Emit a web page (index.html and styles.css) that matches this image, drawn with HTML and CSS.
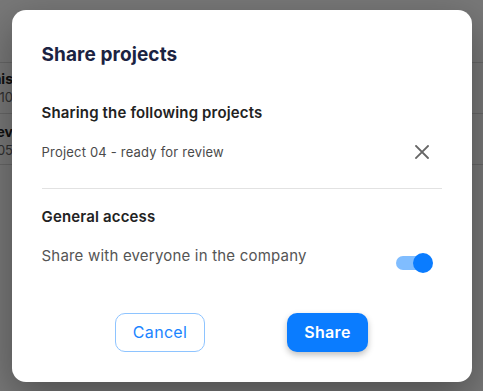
FILE: index.html
```html
<!DOCTYPE html>
<html lang="en">
<head>
<meta charset="utf-8">
<title>Share projects</title>
<link rel="stylesheet" href="styles.css">
</head>
<body>
<div class="page">
  <div class="row"><div class="cell"><span class="name">Banis</span><span class="num">1210</span></div></div>
  <div class="row"><div class="cell"><span class="name">Rev</span><span class="num">1205</span></div></div>
  <div class="row"></div>
</div>
<div class="overlay">
  <div class="dialog" role="dialog" aria-labelledby="dlg-title">
    <h2 class="title" id="dlg-title">Share projects</h2>
    <h3 class="section-title first">Sharing the following projects</h3>
    <div class="item-row">
      <span class="item-text">Project 04 - ready for review</span>
      <button class="icon-btn" aria-label="Remove">
        <svg width="14" height="14" viewBox="0 0 14 14"><path d="M1 1L13 13M13 1L1 13" stroke="#666" stroke-width="1.8" stroke-linecap="square" fill="none"/></svg>
      </button>
    </div>
    <hr class="divider">
    <h3 class="section-title">General access</h3>
    <div class="item-row">
      <span class="item-text access">Share with everyone in the company</span>
      <span class="toggle"><span class="track"></span><span class="knob"></span></span>
    </div>
    <div class="actions">
      <button class="btn btn-outline">Cancel</button>
      <button class="btn btn-primary">Share</button>
    </div>
  </div>
</div>
</body>
</html>
```
FILE: styles.css
```css
* { box-sizing: border-box; }
html, body { margin: 0; padding: 0; }
body {
  width: 483px;
  height: 391px;
  overflow: hidden;
  background: #ffffff;
  font-family: "Inter", "Lato", sans-serif;
  position: relative;
}
.page {
  padding-top: 62px;
}
.row {
  height: 51px;
  border-top: 1px solid #dcdcdc;
  display: flex;
}
.cell {
  width: 13px;
  overflow: hidden;
  display: flex;
  flex-direction: column;
  align-items: flex-end;
  padding-top: 6px;
  white-space: nowrap;
}
.row + .row .cell { padding-top: 8px; }
.name { font-weight: 700; font-size: 14px; color: #222; line-height: 19px; }
.num { font-size: 13px; color: #666; line-height: 19px; }

.overlay {
  position: absolute;
  inset: 0;
  background: rgba(0,0,0,0.53);
  display: flex;
  align-items: center;
  justify-content: center;
}
.dialog {
  width: 460px;
  height: 372px;
  background: #fff;
  border-radius: 14px;
  padding: 33px 30px 30px;
  display: flex;
  flex-direction: column;
  box-shadow: 0 14px 40px rgba(0,0,0,0.35);
}
.title {
  margin: 0;
  font-size: 19px;
  line-height: 24px;
  font-weight: 700;
  color: #1b2342;
  letter-spacing: 0.1px;
}
.section-title {
  margin: 18px 0 0;
  font-size: 15px;
  line-height: 20px;
  font-weight: 600;
  color: #222;
  letter-spacing: 0.15px;
}
.section-title.first { margin-top: 36px; }
.item-row {
  margin-top: 19px;
  display: flex;
  align-items: center;
  justify-content: space-between;
  height: 20px;
}
.item-text {
  font-size: 13px;
  line-height: 20px;
  color: #4a4a4a;
  letter-spacing: 0.2px;
}
.item-text.access { font-size: 15px; color: #555; letter-spacing: 0.2px; }
.icon-btn {
  border: 0;
  background: none;
  padding: 0;
  margin-right: 13px;
  width: 14px;
  height: 14px;
  display: flex;
}
.divider {
  margin: 26px 0 0;
  border: 0;
  border-top: 1px solid #e2e2e2;
  height: 0;
}
.toggle {
  position: relative;
  width: 37px;
  height: 20px;
  margin-right: 9px;
  margin-top: 14px;
  display: inline-block;
}
.track {
  position: absolute;
  left: 0;
  top: 3px;
  width: 32px;
  height: 14px;
  border-radius: 7px;
  background: #80bdff;
}
.knob {
  position: absolute;
  right: 0;
  top: 0;
  width: 20px;
  height: 20px;
  border-radius: 50%;
  background: #0a7cff;
}
.actions {
  margin-top: 47px;
  display: flex;
  justify-content: center;
  gap: 82px;
}
.btn {
  height: 39px;
  border-radius: 10px;
  font-family: inherit;
  font-size: 16px;
  cursor: pointer;
  letter-spacing: 0.3px;
}
.btn-outline {
  width: 90px;
  background: #fff;
  border: 1px solid #8ec4ff;
  color: #1a84ff;
  font-weight: 400;
}
.btn-primary {
  width: 81px;
  background: #0a7cff;
  border: 0;
  color: #fff;
  font-weight: 600;
  box-shadow: 0 3px 6px rgba(0,0,0,0.25);
}
```
